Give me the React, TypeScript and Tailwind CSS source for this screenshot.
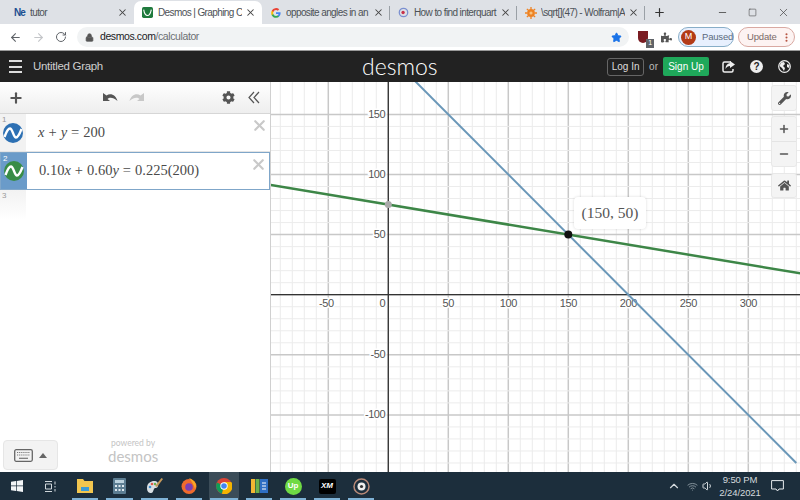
import { ArrowLeft, ArrowRight, RotateCw, Lock, Star, Plus, X, Minus, ChevronUp, Volume1, Wifi, MoreVertical, Square } from 'lucide-react'
import { FaCog, FaWrench, FaHome, FaPuzzlePiece } from 'react-icons/fa'

const SANS = { fontFamily: '"Liberation Sans", Arial, sans-serif' }
const LOGO = { fontFamily: 'Lato, "Liberation Sans", sans-serif' }

const tabs = [
  { title: 'tutor', w: 'w-[134px]', first: true, icon: <span className="text-[10px] font-bold tracking-[-1px] text-[#1d4f91]">Ne</span> },
  { title: 'Desmos | Graphing Ca', w: 'w-[128px]', active: true, icon: <DesmosFavicon /> },
  { title: 'opposite angles in an', w: 'w-[128px]', icon: <GoogleIcon /> },
  { title: 'How to find interquart', w: 'w-[127px]', icon: <DotIcon /> },
  { title: '\\sqrt[](47) - Wolfram|A', w: 'w-[128px]', icon: <SunIcon /> },
]

function DesmosFavicon() {
  return (
    <svg width="11" height="11" viewBox="0 0 13 13">
      <rect width="13" height="13" rx="2" fill="#1f7a3d" />
      <path d="M2 3c1 6 3 7 4.500 7S10 8 11 3" fill="none" stroke="#fff" strokeWidth="1.300" />
    </svg>
  )
}

function GoogleIcon() {
  return (
    <svg width="10" height="10" viewBox="0 0 24 24">
      <path d="M23 12.300c0-.8-.1-1.600-.2-2.300H12v4.400h6.200c-.3 1.400-1.100 2.600-2.300 3.400v2.800h3.700c2.200-2 3.400-5 3.400-8.300z" fill="#4285f4" />
      <path d="M12 23.500c3.100 0 5.700-1 7.600-2.800l-3.700-2.900c-1 .7-2.400 1.100-3.900 1.100-3 0-5.500-2-6.400-4.800H1.800v3c1.900 3.800 5.800 6.400 10.200 6.400z" fill="#34a853" />
      <path d="M5.600 14.100a7 7 0 0 1 0-4.400v-3H1.800a11.500 11.500 0 0 0 0 10.400z" fill="#fbbc05" />
      <path d="M12 4.800c1.700 0 3.200.6 4.400 1.700l3.300-3.300A11.500 11.500 0 0 0 1.800 6.700l3.800 3c.9-2.800 3.400-4.900 6.400-4.900z" fill="#ea4335" />
    </svg>
  )
}

function DotIcon() {
  return (
    <svg width="11" height="11" viewBox="0 0 13 13">
      <circle cx="6.500" cy="6.500" r="5" fill="none" stroke="#7a8fd0" strokeWidth="1.500" />
      <circle cx="6" cy="6.500" r="2" fill="#c8324a" />
    </svg>
  )
}

function SunIcon() {
  return (
    <svg width="12" height="12" viewBox="0 0 13 13">
      <circle cx="6.500" cy="6.500" r="4.200" fill="#ee8222" />
      <circle cx="6.500" cy="6.500" r="1.700" fill="#f8c27e" />
      <path d="M6.500 0v2.500M6.500 10.500V13M0 6.500h2.500M10.500 6.500H13M2 2l1.700 1.700M9.300 9.300 11 11M2 11l1.700-1.700M9.300 3.700 11 2" stroke="#ee8222" strokeWidth="1.400" />
    </svg>
  )
}

function CurveIcon({ bg }: { bg: string }) {
  return (
    <svg width="20" height="20" viewBox="0 0 20 20">
      <circle cx="10" cy="10" r="10" fill={bg} />
      <path d="M1.500 14C4 7 5.500 5.500 7 5.500c2.500 0 3.500 9 6 9 1.500 0 3-2 5.500-8.500" fill="none" stroke="#fff" strokeWidth="2.400" />
    </svg>
  )
}

function ExprRow({ n, bg, active, children }: { n: number; bg: string; active?: boolean; children: React.ReactNode }) {
  return (
    <div className={active ? 'relative flex h-[38px] border border-[#7fa6c9]' : 'relative flex h-[38px] border-b border-[#e4e4e4]'}>
      <div className={active ? 'relative flex w-[26px] items-center justify-center bg-[#6a9bc9]' : 'relative flex w-[26px] items-center justify-center bg-[#f2f2f2]'}>
        <span className={active ? 'absolute left-[2px] top-0 text-[8px] text-white' : 'absolute left-[2px] top-0 text-[8px] text-[#999]'}>{n}</span>
        <CurveIcon bg={bg} />
      </div>
      <div className="flex flex-1 items-center pl-[12px] text-[14.500px] text-[#4a4a4a]" style={{ fontFamily: '"Liberation Serif", serif' }}>
        {children}
      </div>
      <X size={17} strokeWidth={3} className="absolute right-[2px] top-[3px] text-[#c9c9c9]" />
    </div>
  )
}

function Sidebar() {
  return (
    <aside className="flex w-[271px] shrink-0 flex-col border-r border-[#d0d0d0] bg-white">
      <div className="flex h-[32px] items-center border-b border-[#d6d6d6] bg-gradient-to-b from-white to-[#eeeeee] pl-[8px] pr-[10px]">
        <Plus size={16} strokeWidth={3.200} className="text-[#555]" />
        <div className="ml-[79px] flex gap-[11px]">
          <svg width="15" height="11" viewBox="0 0 15 11"><path d="M0 1v8h7L4.500 7C6.500 5 10 5 14.500 9 13 3.500 8 .5 3.500 3.500z" fill="#555" /></svg>
          <svg width="15" height="11" viewBox="0 0 15 11"><path d="M15 1v8H8l2.500-2C8.500 5 5 5 .5 9 2 3.500 7 .5 11.500 3.500z" fill="#c8c8c8" /></svg>
        </div>
        <div className="ml-auto flex items-center gap-[13px]">
          <FaCog size={13} className="text-[#555]" />
          <svg width="12" height="13" viewBox="0 0 12 13"><path d="M6 1 1 6.500 6 12M11 1 6 6.500 11 12" fill="none" stroke="#555" strokeWidth="1.200" /></svg>
        </div>
      </div>
      <ExprRow n={1} bg="#2d70b3">
        <i>x</i>
        <span className="mx-[4px]">+</span>
        <i>y</i>
        <span className="mx-[4px]">=</span>
        <span>200</span>
      </ExprRow>
      <ExprRow n={2} bg="#388c46" active>
        <span>0.10</span>
        <i>x</i>
        <span className="mx-[4px]">+</span>
        <span>0.60</span>
        <i>y</i>
        <span className="mx-[4px]">=</span>
        <span>0.225(200)</span>
      </ExprRow>
      <div className="flex h-[30px]">
        <div className="relative w-[26px] bg-gradient-to-b from-[#f2f2f2] to-white">
          <span className="absolute left-[2px] top-0 text-[8px] text-[#999]">3</span>
        </div>
      </div>
      <div className="mt-auto flex items-end pb-[2px] pl-[3px]">
        <div className="flex h-[30px] w-[55px] items-center justify-center gap-[6px] rounded-[4px] border border-[#e6e6e6] bg-[#f3f3f3]">
          <svg width="19" height="13" viewBox="0 0 19 13">
            <rect x=".7" y=".7" width="17.600" height="11.600" rx="1.500" fill="none" stroke="#666" strokeWidth="1.300" />
            <path d="M3 3.500h13M3 6h13" stroke="#777" strokeWidth="1.200" strokeDasharray="1.200 .9" />
            <path d="M5 9.300h9" stroke="#777" strokeWidth="1.200" />
          </svg>
          <svg width="8" height="5" viewBox="0 0 8 5"><path d="M4 0 8 5H0z" fill="#666" /></svg>
        </div>
        <div className="mb-[6px] ml-[50px] flex flex-col items-center text-[#c4c4c4]" style={LOGO}>
          <span className="text-[8.500px] leading-[11px]">powered by</span>
          <span className="text-[15px] leading-[15px]">desmos</span>
        </div>
      </div>
    </aside>
  )
}

function Graph() {
  const ox = 117.3
  const oy = 212.7
  const unit = 1.2
  const xs: number[] = []
  for (let i = -9; i <= 34; i++) xs.push(ox + i * 12)
  const ys: number[] = []
  for (let i = -15; i <= 19; i++) ys.push(oy + i * 12.02)
  const px = (x: number) => ox + x * unit
  const py = (y: number) => oy - y * 1.202
  const xLabels = [-50, 50, 100, 150, 200, 250, 300]
  const yLabels = [150, 100, 50, -50, -100]
  return (
    <svg width="529" height="390" viewBox="0 0 529 390" className="absolute inset-0">
      {xs.map((x, i) => (
        <line key={i} x1={x} x2={x} y1="0" y2="390" stroke={(i - 9) % 5 === 0 ? '#c8c8c8' : '#ececec'} strokeWidth={(i - 9) % 5 === 0 ? 1.500 : 1} />
      ))}
      {ys.map((y, i) => (
        <line key={i} y1={y} y2={y} x1="0" x2="529" stroke={(i - 15) % 5 === 0 ? '#c8c8c8' : '#ececec'} strokeWidth={(i - 15) % 5 === 0 ? 1.500 : 1} />
      ))}
      <line x1={ox} x2={ox} y1="0" y2="390" stroke="#333" strokeWidth="1.300" />
      <line y1={oy} y2={oy} x1="0" x2="529" stroke="#333" strokeWidth="1.300" />
      <g fontSize="11" letterSpacing="-0.4" fill="#555" style={SANS} stroke="#fff" strokeWidth="3" paintOrder="stroke">
        {xLabels.map((v) => (
          <text key={v} x={px(v) - (v < 0 ? 2 : 0)} y={oy + 9} textAnchor="middle" dominantBaseline="middle">{v}</text>
        ))}
        {yLabels.map((v) => (
          <text key={v} x={ox - 3} y={py(v) + .5} textAnchor="end" dominantBaseline="middle">{v}</text>
        ))}
        <text x={ox - 3} y={oy + 9} textAnchor="end" dominantBaseline="middle">0</text>
      </g>
      <line x1={px(200 - 190)} y1={py(190)} x2={px(200 + 140)} y2={py(-140)} stroke="#6a97b8" strokeWidth="2" />
      <line x1={px(-100)} y1={py(75 + 100 / 6)} x2={px(400)} y2={py(75 - 400 / 6)} stroke="#3d8647" strokeWidth="2.500" />
      <circle cx={ox} cy={py(75)} r="3.500" fill="#aaa" />
      <circle cx={px(150)} cy={py(50)} r="4" fill="#111" />
    </svg>
  )
}

function GraphPanel() {
  return (
    <div className="relative flex-1 overflow-hidden bg-white">
      <Graph />
      <div className="absolute left-[303px] top-[115px] flex h-[32px] w-[72px] items-center justify-center rounded-[4px] bg-white text-[15.500px] text-[#555] shadow-[0_0_3px_rgba(0,0,0,0.15)]" style={{ fontFamily: '"Liberation Serif", serif' }}>
        (150, 50)
      </div>
      <div className="absolute right-[3px] top-[3px] flex h-[26px] w-[26px] items-center justify-center rounded-[3px] border border-[#e8e8e8] bg-[#f4f4f4]">
        <FaWrench size={13} className="text-[#555]" />
      </div>
      <div className="absolute right-[3px] top-[34px] flex h-[51px] w-[26px] flex-col rounded-[3px] border border-[#e8e8e8] bg-[#f4f4f4]">
        <div className="flex flex-1 items-center justify-center border-b border-[#e4e4e4]"><Plus size={12} strokeWidth={3} className="text-[#555]" /></div>
        <div className="flex flex-1 items-center justify-center"><Minus size={12} strokeWidth={3} className="text-[#555]" /></div>
      </div>
      <div className="absolute right-[3px] top-[91px] flex h-[25px] w-[26px] items-center justify-center rounded-[3px] border border-[#e8e8e8] bg-[#f4f4f4]">
        <FaHome size={13} className="text-[#555]" />
      </div>
    </div>
  )
}

function TabStrip() {
  return (
    <div className="flex h-[24px] items-end bg-[#dee1e6]">
      {tabs.map((t, i) => (
        <div key={i} className={
          t.active
            ? `${t.w} flex h-[23px] items-center rounded-t-[7px] bg-white pl-[7px] pr-[6px]`
            : t.first
              ? `${t.w} flex h-[23px] items-center pl-[13px] pr-[6px]`
              : `${t.w} flex h-[23px] items-center pl-[7px]`
        }>
          <span className="flex w-[13px] shrink-0 items-center justify-center">{t.icon}</span>
          <span className="ml-[4px] flex-1 overflow-hidden whitespace-nowrap text-[10px] tracking-[-0.6px] text-[#4d5156]">{t.title}</span>
          <X size={11} strokeWidth={2.200} className="ml-[3px] shrink-0 text-[#444]" />
          {!t.active && !t.first && <span className="ml-[5px] h-[14px] w-px shrink-0 bg-[#9aa0a6]" />}
        </div>
      ))}
      <div className="flex h-[23px] flex-1 items-center pl-[8px]">
        <Plus size={13} strokeWidth={2.200} className="text-[#333]" />
        <div className="ml-auto flex items-center gap-[20px] pr-[10px]">
          <Minus size={11} className="text-[#555]" />
          <Square size={9} strokeWidth={1.500} className="text-[#444]" />
          <X size={13} strokeWidth={1.300} className="text-[#444]" />
        </div>
      </div>
    </div>
  )
}

function AddressBar() {
  return (
    <div className="flex h-[26px] items-center bg-white pl-[9px] pr-[5px]">
      <ArrowLeft size={13} className="text-[#5f6368]" />
      <ArrowRight size={13} className="ml-[10px] text-[#c3c5c8]" />
      <RotateCw size={12} className="ml-[10px] text-[#5f6368]" />
      <div className="ml-[10px] flex h-[20px] w-[553px] items-center rounded-full bg-[#f1f3f4] pl-[8px] pr-[7px]">
        <Lock size={9} fill="#555" className="text-[#555]" />
        <span className="ml-[6px] text-[10.500px] tracking-[-0.4px] text-[#202124]">desmos.com<span className="text-[#6b6f73]">/calculator</span></span>
        <Star size={11} fill="#1a73e8" className="ml-auto text-[#1a73e8]" />
      </div>
      <div className="relative ml-[9px] h-[12px] w-[10px] rounded-b-[5px] bg-[#7a1c22]">
        <span className="absolute bottom-[-5px] right-[-6px] flex h-[9px] w-[8px] items-center justify-center bg-[#5f6368] text-[7px] text-white">1</span>
      </div>
      <FaPuzzlePiece size={11} className="ml-[13px] text-[#555]" />
      <div className="ml-[6px] flex h-[20px] w-[56px] items-center rounded-full border border-[#88aec8] bg-[#e8f0fe] pl-[2px]">
        <span className="flex h-[15px] w-[15px] items-center justify-center rounded-full bg-[#b33a16] text-[9px] text-white">M</span>
        <span className="ml-[6px] text-[9.500px] tracking-[-0.2px] text-[#5a6b80]">Paused</span>
      </div>
      <div className="ml-[4px] flex h-[20px] w-[57px] items-center rounded-full border border-[#d9a9a2] bg-[#fdf3f2] pl-[8px]">
        <span className="text-[9.500px] tracking-[-0.2px] text-[#7a6a68]">Update</span>
        <MoreVertical size={11} strokeWidth={2.500} className="ml-auto mr-[2px] text-[#b5523f]" />
      </div>
    </div>
  )
}

function DesmosHeader() {
  return (
    <header className="flex h-[32px] items-center border-t border-[#9a9a9a] bg-[#222222] text-white">
      <div className="flex w-[362px] items-center pl-[9px]">
        <div className="flex h-[13px] w-[13px] flex-col justify-between">
          <span className="h-[2px] bg-[#ddd]" />
          <span className="h-[2px] bg-[#ddd]" />
          <span className="h-[2px] bg-[#ddd]" />
        </div>
        <span className="ml-[11px] text-[11.500px] tracking-[-0.3px] text-[#cfcfcf]">Untitled Graph</span>
      </div>
      <span className="w-[76px] text-[23px] font-light leading-none text-white" style={LOGO}>desmos</span>
      <div className="flex flex-1 items-center justify-end pr-[9px]">
        <div className="flex h-[18px] w-[37px] items-center justify-center rounded-[3px] border border-[#666] text-[10px] text-[#ddd]">Log In</div>
        <span className="ml-[5px] text-[10px] text-[#bbb]">or</span>
        <div className="ml-[5px] flex h-[19px] w-[46px] items-center justify-center rounded-[2px] bg-[#1fa85a] text-[10px] text-white">Sign Up</div>
        <svg className="ml-[13px]" width="13" height="12" viewBox="0 0 13 12"><path d="M9 1H2.500A1.500 1.500 0 0 0 1 2.500v7A1.500 1.500 0 0 0 2.500 11h7A1.500 1.500 0 0 0 11 9.500V8" fill="none" stroke="#eee" strokeWidth="1.500" /><path d="M8 0l5 3.500L8 7V5C6 5 4.500 6 3.500 8 3.500 5 5 2.500 8 2z" fill="#eee" /></svg>
        <span className="ml-[15px] flex h-[13px] w-[13px] items-center justify-center rounded-full bg-[#eee] text-[10px] font-bold text-[#222]">?</span>
        <svg className="ml-[15px]" width="13" height="13" viewBox="0 0 13 13"><circle cx="6.500" cy="6.500" r="5.800" fill="none" stroke="#eee" strokeWidth="1.200" /><path d="M3 2.500 6 2 7 4 5 6l2 2-1 3-2-3-2.500-2zM9 4l2.500 1L11 8 9 7z" fill="#eee" /></svg>
      </div>
    </header>
  )
}

function TaskIcon({ children, w, active }: { children: React.ReactNode; w: string; active?: boolean }) {
  return (
    <div className={active ? `relative flex h-full ${w} items-center justify-center bg-[#3b4c58]` : `relative flex h-full ${w} items-center justify-center`}>
      {children}
      <span className="absolute bottom-0 left-[1px] right-[1px] h-[2px] bg-[#7fb2d6]" />
    </div>
  )
}

function Taskbar() {
  return (
    <footer className="flex h-[28px] items-center bg-[#1c2e3c] text-[#e6eaee]">
      <svg className="ml-[11px]" width="12" height="12" viewBox="0 0 12 12"><path d="M0 1.700 5 1v4.600H0zM5.700.9 12 0v5.600H5.700zM0 6.300h5V11L0 10.300zM5.700 6.300H12V12l-6.300-.9z" fill="#f2f5f7" /></svg>
      <svg className="ml-[21px]" width="13" height="11" viewBox="0 0 13 11"><path d="M1 .5h7M1 10.500h7M1.500 3h6v5h-6zM11 .5v3M11 5v1.500M11 8v2.500" fill="none" stroke="#cfd6da" /></svg>
      <div className="ml-[14px] flex h-full items-center gap-[6px]">
        <TaskIcon w="w-[28px]">
          <svg width="16" height="14" viewBox="0 0 16 14"><path d="M0 0h6l1.500 2H16v12H0z" fill="#f2c64f" /><rect x="4" y="8" width="8" height="4" fill="#3d9bd6" /></svg>
        </TaskIcon>
        <TaskIcon w="w-[29px]">
          <svg width="13" height="16" viewBox="0 0 13 16"><rect width="13" height="16" rx="1" fill="#5c7d92" /><rect x="2" y="2" width="9" height="3" fill="#bcd2de" /><path d="M2 7h2v2H2zM5.500 7h2v2h-2zM9 7h2v2H9zM2 11h2v2H2zM5.500 11h2v2h-2zM9 11h2v2H9z" fill="#dfe9ef" /></svg>
        </TaskIcon>
        <TaskIcon w="w-[29px]">
          <svg width="17" height="16" viewBox="0 0 17 16"><path d="M1 10c0-5 4-7 7-7s5 2 4 5-3 1-4 3-1 4-3 4-4-1-4-5z" fill="#d9dfe3" /><circle cx="4" cy="9" r="1.300" fill="#3f8dd0" /><circle cx="6" cy="6" r="1.300" fill="#e25b4c" /><circle cx="9" cy="6" r="1.200" fill="#6ab04c" /><path d="M15.500 0 17 1l-6 8-2-1z" fill="#c69a5b" /></svg>
        </TaskIcon>
        <TaskIcon w="w-[28px]">
          <svg width="16" height="16" viewBox="0 0 16 16"><circle cx="8" cy="8.500" r="7.500" fill="#ef6a2d" /><path d="M8 0c3 1 6 3 7 7 0 2-.5 3-1 4-1-4-3-7-6-11z" fill="#f9a825" /><circle cx="8" cy="9" r="3.800" fill="#7b3fb5" /></svg>
        </TaskIcon>
        <TaskIcon w="w-[30px]" active>
          <svg width="16" height="16" viewBox="0 0 16 16"><circle cx="8" cy="8" r="8" fill="#db4437" /><path d="M8 8 1 4.500A8 8 0 0 0 6 15.800z" fill="#0f9d58" /><path d="M8 4h7.300A8 8 0 0 1 6 15.800L8 8z" fill="#f4b400" /><circle cx="8" cy="8" r="3.700" fill="#fff" /><circle cx="8" cy="8" r="2.800" fill="#4285f4" /></svg>
        </TaskIcon>
        <TaskIcon w="w-[28px]">
          <svg width="17" height="14" viewBox="0 0 17 14"><rect width="4" height="14" fill="#f2b632" /><rect x="4.500" width="4" height="14" fill="#6ab04c" /><rect x="9" width="8" height="14" fill="#2f6fc4" /><path d="M11 4h4M11 7h4M11 10h4" stroke="#fff" /></svg>
        </TaskIcon>
        <TaskIcon w="w-[28px]">
          <span className="flex h-[17px] w-[17px] items-center justify-center rounded-full bg-[#6fda44] text-[8px] font-bold text-white">Up</span>
        </TaskIcon>
        <TaskIcon w="w-[28px]">
          <span className="flex h-[15px] w-[17px] items-center justify-center rounded-[2px] bg-black text-[8px] font-bold italic text-white">XM</span>
        </TaskIcon>
        <TaskIcon w="w-[28px]">
          <svg width="17" height="17" viewBox="0 0 17 17"><circle cx="8.500" cy="8.500" r="7.500" fill="none" stroke="#b98a78" strokeWidth="1.500" /><circle cx="8.500" cy="8.500" r="4" fill="#eee" /><circle cx="8.500" cy="8.500" r="1.600" fill="#333" /></svg>
        </TaskIcon>
      </div>
      <div className="ml-auto flex h-full items-center text-[#d4dade]">
        <ChevronUp size={14} />
        <Wifi size={11} className="ml-[6px] text-[#8b98a1]" />
        <Volume1 size={12} className="ml-[4px]" />
        <div className="ml-[6px] flex w-[40px] flex-col items-center text-[9.500px] leading-[13px] tracking-[-0.1px]">
          <span>9:50 PM</span>
          <span>2/24/2021</span>
        </div>
        <svg className="ml-[11px] mr-[16px]" width="13" height="12" viewBox="0 0 13 12"><path d="M.6.6h11.800v8.400H8L6.500 11 5 9H.6z" fill="none" stroke="#e6eaee" /></svg>
      </div>
    </footer>
  )
}

export default function App() {
  return (
    <div className="flex h-[500px] w-[800px] flex-col overflow-hidden bg-white" style={SANS}>
      <TabStrip />
      <AddressBar />
      <DesmosHeader />
      <main className="flex min-h-0 flex-1">
        <Sidebar />
        <GraphPanel />
      </main>
      <Taskbar />
    </div>
  )
}
